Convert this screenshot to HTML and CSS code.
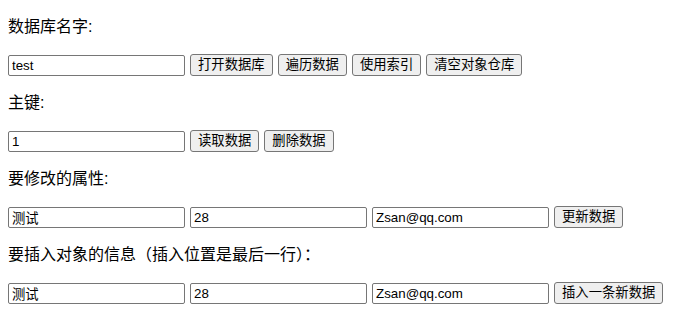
FILE: index.html
```html
<!DOCTYPE html>
<html lang="zh-CN">
<head>
<meta charset="utf-8">
<title>IndexedDB</title>
<link rel="stylesheet" href="styles.css">
</head>
<body>
<div class="page">
  <div class="label">数据库名字:</div>
  <div class="row">
    <input class="field" type="text" value="test">
    <button class="btn">打开数据库</button>
    <button class="btn">遍历数据</button>
    <button class="btn">使用索引</button>
    <button class="btn">清空对象仓库</button>
  </div>

  <div class="label">主键:</div>
  <div class="row">
    <input class="field" type="text" value="1">
    <button class="btn">读取数据</button>
    <button class="btn">删除数据</button>
  </div>

  <div class="label">要修改的属性:</div>
  <div class="row">
    <input class="field" type="text" value="测试">
    <input class="field" type="text" value="28">
    <input class="field" type="text" value="Zsan@qq.com">
    <button class="btn">更新数据</button>
  </div>

  <div class="label">要插入对象的信息（插入位置是最后一行）：</div>
  <div class="row">
    <input class="field" type="text" value="测试">
    <input class="field" type="text" value="28">
    <input class="field" type="text" value="Zsan@qq.com">
    <button class="btn">插入一条新数据</button>
  </div>
</div>
</body>
</html>
```

FILE: styles.css
```css
html, body {
  margin: 0;
  padding: 0;
  background: #ffffff;
}

body {
  font-family: "Liberation Sans", "Noto Sans CJK SC", sans-serif;
  color: #000000;
}

.page {
  display: flex;
  flex-direction: column;
  padding: 16px 8px 0 8px;
}

.label {
  font-size: 16px;
  line-height: 21px;
  height: 21px;
  margin-bottom: 16px;
  white-space: nowrap;
}

.row {
  display: flex;
  align-items: flex-end;
  gap: 5px;
  height: 23px;
  margin-bottom: 16px;
}

.field {
  box-sizing: border-box;
  width: 177px;
  height: 21px;
  margin: 0;
  padding: 0 3px;
  border: 1px solid #767676;
  border-radius: 2px;
  background: #ffffff;
  color: #000000;
  font-family: "Liberation Sans", "Noto Sans CJK SC", sans-serif;
  font-size: 13.33px;
  line-height: 19px;
  outline: none;
}

.btn {
  box-sizing: border-box;
  height: 22px;
  margin: 0;
  padding: 0 7px;
  border: 1px solid #767676;
  border-radius: 3px;
  background: #efefef;
  color: #000000;
  font-family: "Liberation Sans", "Noto Sans CJK SC", sans-serif;
  font-size: 13.33px;
  line-height: 20px;
  white-space: nowrap;
}
```
